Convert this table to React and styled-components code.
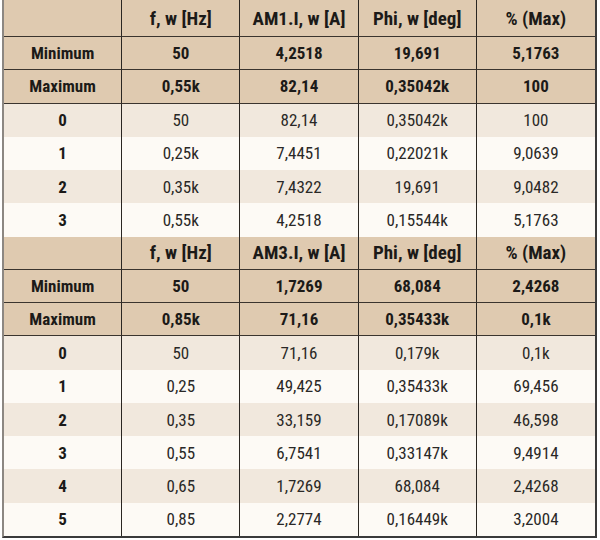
import React from "react";
import styled, { createGlobalStyle } from "styled-components";

const Global = createGlobalStyle`
  html, body { margin: 0; padding: 0; background: #ffffff; }
  body { font-family: "Liberation Sans Narrow", "Roboto Condensed", "DejaVu Sans Condensed", "Liberation Sans", sans-serif; font-stretch: condensed; }
`;

const Grid = styled.div`
  margin-left: 2px;
  width: 595px;
  height: 538px;
  display: grid;
  grid-template-columns: repeat(5, 1fr);
  grid-template-rows: 37px repeat(15, 1fr);
  border-left: 2px solid #8c8782;
  border-right: 2px solid #3a3a3a;
  border-bottom: 2px solid #3a3a3a;
  box-sizing: border-box;
`;

const bg = {
  head: "#dfcab0",
  light: "#f1e8dd",
  white: "#fdfaf5",
};

const Cell = styled.div`
  display: flex;
  align-items: center;
  justify-content: center;
  background: ${(p) => bg[p.$tone]};
  border-right: ${(p) => (p.$last ? "none" : "1px solid #2a2622")};
  border-bottom: ${(p) => (p.$line ? "1px solid #3a342e" : "none")};
  font-size: ${(p) => (p.$head ? "19px" : "17px")};
  font-weight: ${(p) => (p.$bold ? 700 : 400)};
  color: ${(p) => (p.$bold ? "#1c1a18" : "#2a2826")};
  white-space: nowrap;
  overflow: hidden;
`;

const sections = [
  {
    heads: ["", "f, w [Hz]", "AM1.I, w [A]", "Phi, w [deg]", "% (Max)"],
    summary: [
      ["Minimum", "50", "4,2518", "19,691", "5,1763"],
      ["Maximum", "0,55k", "82,14", "0,35042k", "100"],
    ],
    rows: [
      ["0", "50", "82,14", "0,35042k", "100"],
      ["1", "0,25k", "7,4451", "0,22021k", "9,0639"],
      ["2", "0,35k", "7,4322", "19,691", "9,0482"],
      ["3", "0,55k", "4,2518", "0,15544k", "5,1763"],
    ],
  },
  {
    heads: ["", "f, w [Hz]", "AM3.I, w [A]", "Phi, w [deg]", "% (Max)"],
    summary: [
      ["Minimum", "50", "1,7269", "68,084", "2,4268"],
      ["Maximum", "0,85k", "71,16", "0,35433k", "0,1k"],
    ],
    rows: [
      ["0", "50", "71,16", "0,179k", "0,1k"],
      ["1", "0,25", "49,425", "0,35433k", "69,456"],
      ["2", "0,35", "33,159", "0,17089k", "46,598"],
      ["3", "0,55", "6,7541", "0,33147k", "9,4914"],
      ["4", "0,65", "1,7269", "68,084", "2,4268"],
      ["5", "0,85", "2,2774", "0,16449k", "3,2004"],
    ],
  },
];

export default function App() {
  const cells = [];
  sections.forEach((s, si) => {
    s.heads.forEach((h, i) =>
      cells.push(
        <Cell key={`h${si}-${i}`} $tone="head" $head $bold $line $last={i === 4}>
          {h}
        </Cell>
      )
    );
    s.summary.forEach((r, ri) =>
      r.forEach((v, i) =>
        cells.push(
          <Cell key={`s${si}-${ri}-${i}`} $tone="head" $bold $line $last={i === 4}>
            {v}
          </Cell>
        )
      )
    );
    s.rows.forEach((r, ri) =>
      r.forEach((v, i) =>
        cells.push(
          <Cell
            key={`r${si}-${ri}-${i}`}
            $tone={ri % 2 === 0 ? "light" : "white"}
            $bold={i === 0}
            $last={i === 4}
          >
            {v}
          </Cell>
        )
      )
    );
  });
  return (
    <>
      <Global />
      <Grid>{cells}</Grid>
    </>
  );
}
